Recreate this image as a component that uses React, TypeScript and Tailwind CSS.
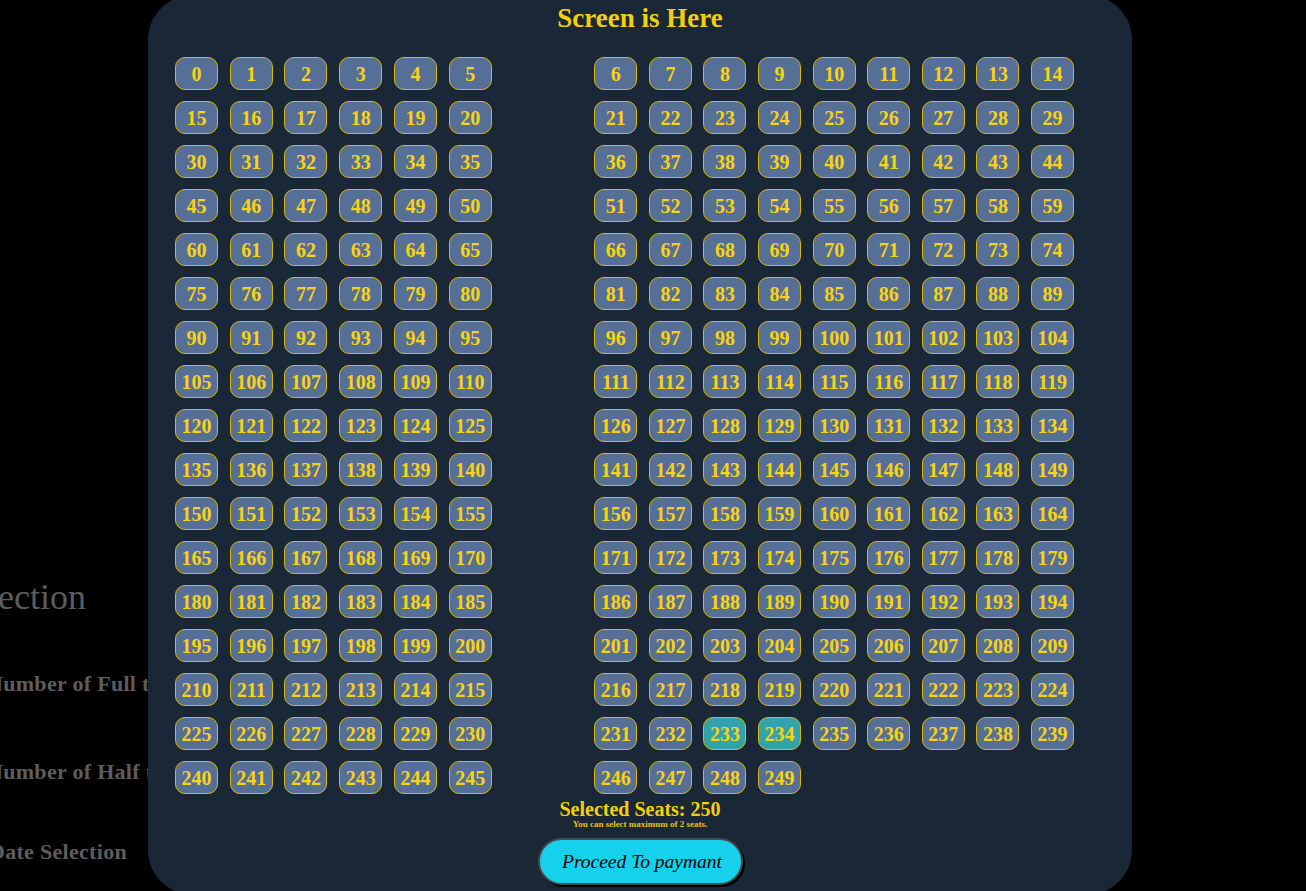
import React from "react";

const serif = { fontFamily: '"Liberation Serif", "DejaVu Serif", serif' };

function Seat({ n }: { n: number }) {
  const selected = n === 233 || n === 234;
  return (
    <div
      className={`w-[43px] h-[33px] shrink-0 rounded-[10px] border border-[#d9b80a] flex items-center justify-center text-[20px] font-bold leading-none text-[#f8d313] ${
        selected ? "bg-[#30a3ab]" : "bg-[#566f97]"
      }`}
    >
      {n}
    </div>
  );
}

export default function App() {
  const rows: number[][] = [];
  for (let r = 0; r < 17; r++) {
    const row: number[] = [];
    for (let c = 0; c < 15; c++) {
      const n = r * 15 + c;
      if (n < 250) row.push(n);
    }
    rows.push(row);
  }

  return (
    <div className="relative w-full h-[891px] bg-black overflow-hidden" style={serif}>
      {/* background page content (dimmed, partly covered by the modal) */}
      <div className="w-[148px] h-[891px] overflow-hidden flex flex-col text-[#5d5d5d]">
        <div className="mt-[575px] w-[86px] flex justify-end whitespace-nowrap text-[36px] leading-[44px]">
          Ticket Selection
        </div>
        <div className="mt-[51px] -ml-[13px] whitespace-nowrap text-[22px] leading-[28px] font-bold tracking-[0.3px]">
          Number of Full tickets
        </div>
        <div className="mt-[60px] -ml-[13px] whitespace-nowrap text-[22px] leading-[28px] font-bold tracking-[0.3px]">
          Number of Half tickets
        </div>
        <div className="mt-[52px] w-[127px] flex justify-end whitespace-nowrap text-[22px] leading-[28px] font-bold tracking-[0.3px]">
          Date Selection
        </div>
      </div>

      {/* seat selection modal */}
      <div className="absolute left-[148px] top-[-5px] w-[984px] h-[900px] rounded-[45px] bg-[#1a2737] flex flex-col items-stretch pt-[6.5px]">
        <div className="text-center text-[27px] leading-[32px] font-bold text-[#f5cf0c]">
          Screen is Here
        </div>
        <div className="mt-[23.5px] pl-[27px] flex flex-col gap-[11px]">
          {rows.map((row, i) => (
            <div key={i} className="flex">
              <div className="flex gap-[11.74px] w-[316.7px]">
                {row.slice(0, 6).map((n) => (
                  <Seat key={n} n={n} />
                ))}
              </div>
              <div className="ml-[102.6px] flex gap-[11.6px]">
                {row.slice(6).map((n) => (
                  <Seat key={n} n={n} />
                ))}
              </div>
            </div>
          ))}
        </div>
        <div className="mt-[6px] text-center text-[20px] leading-[18px] font-bold text-[#f5cf0c]">
          Selected Seats: 250
        </div>
        <div className="mt-[1px] text-center text-[9px] leading-[10px] font-bold text-[#e8c20c]">
          You can select maximum of 2 seats.
        </div>
        <div className="mt-[9px] flex justify-center">
          <button className="w-[205px] h-[47px] rounded-full bg-[#16d1ec] border-2 border-[#4a4a4a] shadow-[2px_2px_0_#000] text-black italic text-[19.5px] pl-[4px]">
            Proceed To paymant
          </button>
        </div>
      </div>
    </div>
  );
}
